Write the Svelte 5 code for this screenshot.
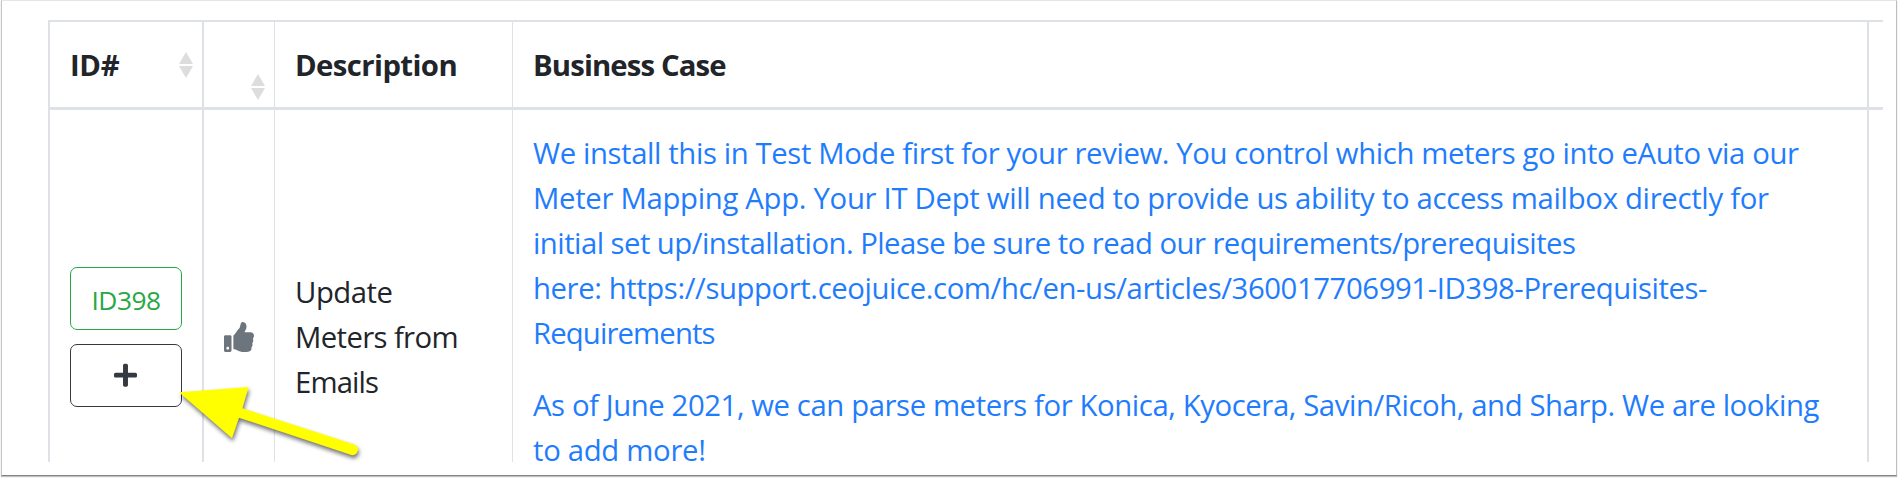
<script>
  const columns = [
    { label: 'ID#', width: 45.6, sort: 'middle' },
    { label: '', width: 0, sort: 'bottom' },
    { label: 'Description', width: 158.7 },
    { label: 'Business Case', width: 189.5 },
    { label: '', width: 0 }
  ];
  const description = [
    ['Update', 94],
    ['Meters from', 159.6],
    ['Emails', 80]
  ];
  const intro = [
    ['We install this in Test Mode first for your review. You control which meters go into eAuto via our', 1262],
    ['Meter Mapping App. Your IT Dept will need to provide us ability to access mailbox directly for', 1232],
    ['initial set up/installation. Please be sure to read our requirements/prerequisites', 1039],
    ['here: https://support.ceojuice.com/hc/en-us/articles/360017706991-ID398-Prerequisites-', 1170.5],
    ['Requirements', 178.5]
  ];
  const update = [
    ['As of June 2021, we can parse meters for Konica, Kyocera, Savin/Ricoh, and Sharp. We are looking', 1282.5],
    ['to add more!', 169]
  ];

  // Tracks a line of text so that its ink spans the given measure.
  function fit(node, width) {
    const range = document.createRange();
    const apply = () => {
      if (!width) return;
      node.style.letterSpacing = '0px';
      range.selectNodeContents(node);
      const natural = range.getBoundingClientRect().width - 4;
      node.style.letterSpacing = `${(width - natural) / (node.textContent.length - 1)}px`;
    };
    apply();
    document.fonts.ready.then(apply);
  }
</script>

<main class="frame">
  <div class="table">
    <div class="row head">
      {#each columns as column}
        <div class="cell">
          <span class="line" use:fit={column.width}>{column.label}</span>
          {#if column.sort}
            <svg class="sort {column.sort}" viewBox="0 0 14 26" width="14" height="26" aria-hidden="true">
              <path d="M7 0L14 12H0zM0 14H14L7 26z" />
            </svg>
          {/if}
        </div>
      {/each}
    </div>
    <div class="row body">
      <div class="cell actions">
        <button class="id"><span use:fit={65.6}>ID398</span></button>
        <button class="add" aria-label="Add">
          <svg viewBox="0 0 448 512" width="23" height="26.3"><path d="M416 208H272V64c0-17.67-14.33-32-32-32h-32c-17.67 0-32 14.33-32 32v144H32c-17.67 0-32 14.33-32 32v32c0 17.67 14.33 32 32 32h144v144c0 17.67 14.33 32 32 32h32c17.67 0 32-14.33 32-32V304h144c17.67 0 32-14.33 32-32v-32c0-17.67-14.33-32-32-32z" /></svg>
        </button>
      </div>
      <div class="cell vote">
        <svg viewBox="0 0 512 512" width="30" height="30"><path d="M104 224H24c-13.255 0-24 10.745-24 24v240c0 13.255 10.745 24 24 24h80c13.255 0 24-10.745 24-24V248c0-13.255-10.745-24-24-24zM64 472c-13.255 0-24-10.745-24-24s10.745-24 24-24 24 10.745 24 24-10.745 24-24 24zM384 81.452c0 42.416-25.97 66.208-33.277 94.548h101.723c33.397 0 59.397 27.746 59.553 58.098.084 17.938-7.546 37.249-19.439 49.197l-.11.11c9.836 23.337 8.237 56.037-9.308 79.469 8.681 25.895-.069 57.704-16.382 74.757 4.298 17.598 2.244 32.575-6.148 44.632C440.202 511.587 389.616 512 346.839 512l-2.845-.001c-48.287-.017-87.806-17.598-119.56-31.725-15.957-7.099-36.821-15.887-52.651-16.178-6.54-.12-11.783-5.457-11.783-11.998v-213.77c0-3.2 1.282-6.271 3.558-8.521 39.614-39.144 56.648-80.587 89.117-113.111 14.804-14.832 20.188-37.236 25.393-58.902C282.515 39.293 291.817 0 312 0c24 0 72 8 72 81.452z" /></svg>
      </div>
      <div class="cell description">
        {#each description as [text, width]}
          <span class="line" use:fit={width}>{text}</span>
        {/each}
      </div>
      <div class="cell case">
        <p>
          {#each intro as [text, width]}
            <span class="line" use:fit={width}>{text}</span>
          {/each}
        </p>
        <p>
          {#each update as [text, width]}
            <span class="line" use:fit={width}>{text}</span>
          {/each}
        </p>
      </div>
      <div class="cell"></div>
    </div>
  </div>
  <svg class="pointer" viewBox="0 0 190 75" width="190" height="75" aria-hidden="true">
    <path d="M4 12.3L73.7 7L67.4 28.3L179.5 64.4A5.6 5.6 0 0 1 176.5 75.1L64 37.7L57 58.3Z" />
  </svg>
</main>

<style>
  :global(body) { margin: 0; background: #fff; }
  .frame {
    position: relative;
    box-sizing: border-box;
    width: 1898px;
    height: 478px;
    padding: 20px 15px 16px 48px;
    overflow: hidden;
    background: #fff;
    color: #212529;
    font: 29.3px/45px "Open Sans", "Noto Sans", sans-serif;
  }
  .frame::after {
    content: "";
    position: absolute;
    inset: 0 1px 2px 1px;
    border: 1px solid;
    border-color: #e6e6e6 #bdbdbd #858585 #c4c4c4;
    box-shadow: 0 1px 1px rgba(0, 0, 0, 0.25);
    pointer-events: none;
  }
  .table {
    box-sizing: border-box;
    height: 442px;
    overflow: hidden;
    border-top: 2px solid #dee2e6;
    border-left: 2px solid #dee2e6;
  }
  .row {
    display: grid;
    grid-template-columns: 154px 71px 238px 1356px 14px;
  }
  .head { height: 85px; border-bottom: 3px solid #dee2e6; font-weight: 700; }
  .body { height: 352px; }
  .cell {
    box-sizing: border-box;
    min-width: 0;
    padding-left: 20px;
    border-right: 1px solid #dee2e6;
  }
  .cell:nth-child(1), .cell:nth-child(4) { border-right-width: 2px; }
  .cell:last-child { border-right: 0; padding: 0; }
  .line { display: block; width: max-content; white-space: pre; }
  .head .cell { display: flex; justify-content: space-between; padding-top: 21px; }
  .sort { fill: #ddd; margin: 9px 9px 0 0; }
  .sort.bottom { margin-top: 31px; }
  .actions { display: flex; flex-direction: column; gap: 14px; padding-top: 157px; }
  button {
    display: flex;
    align-items: center;
    justify-content: center;
    box-sizing: border-box;
    width: 112px;
    height: 63px;
    padding: 0;
    border: 1px solid #343a40;
    border-radius: 7px;
    background: #fff;
    font: 26.3px/39px "Open Sans", "Noto Sans", sans-serif;
  }
  .id { border-color: #28a745; color: #28a745; }
  .id span { margin-top: 4px; }
  .add svg { margin-right: 1px; fill: #343a40; }
  .vote svg { display: block; margin-top: 212px; fill: #6c757d; }
  .description { padding-top: 160px; }
  .case { padding-top: 21px; color: #1f7dfd; }
  p { margin: 0 0 27px; }
  .pointer {
    position: absolute;
    left: 175px;
    top: 380px;
    overflow: visible;
    fill: #ff0;
    filter: drop-shadow(1px 3px 2px rgba(0, 0, 0, 0.55));
  }
</style>
